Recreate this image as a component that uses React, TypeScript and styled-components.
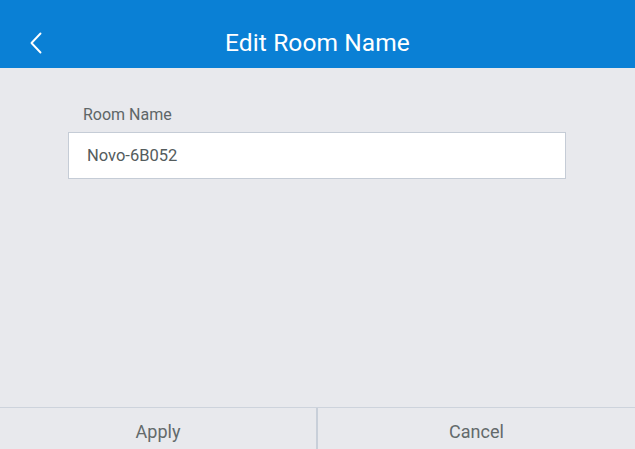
import React from 'react';
import styled, { createGlobalStyle } from 'styled-components';

const GlobalStyle = createGlobalStyle`
  html, body {
    margin: 0;
    padding: 0;
    background-color: #e8e9ed;
    font-family: Roboto, "Liberation Sans", sans-serif;
  }
`;

const Screen = styled.div`
  width: 635px;
  height: 449px;
  display: flex;
  flex-direction: column;
  background-color: #e8e9ed;
  overflow: hidden;
`;

const Header = styled.header`
  box-sizing: border-box;
  height: 68px;
  padding-top: 17px;
  flex-shrink: 0;
  display: grid;
  grid-template-columns: 68px 1fr 68px;
  align-items: center;
  background-color: #0a80d5;
  color: #ffffff;
`;

const BackButton = styled.button`
  height: 51px;
  padding: 0 0 0 29px;
  display: flex;
  align-items: center;
  background: none;
  border: none;
  color: #ffffff;
  cursor: pointer;
`;

const Title = styled.h1`
  margin: 0;
  text-align: center;
  font-size: 24.5px;
  font-weight: 400;
  letter-spacing: 0.1px;
`;

const Content = styled.main`
  flex: 1;
  padding: 0 69px 0 68px;
  display: flex;
  flex-direction: column;
`;

const Label = styled.label`
  margin: 38px 0 8px 15px;
  font-size: 16px;
  line-height: 18px;
  color: #5e6667;
`;

const NameInput = styled.input`
  box-sizing: border-box;
  width: 498px;
  height: 47px;
  padding: 0 18px;
  border: 1.5px solid #c5ccd6;
  background-color: #ffffff;
  font-family: Roboto, "Liberation Sans", sans-serif;
  font-size: 16.5px;
  color: #545c5d;
  outline: none;
`;

const Footer = styled.footer`
  height: 41px;
  flex-shrink: 0;
  display: grid;
  grid-template-columns: 316px 1fr;
  border-top: 1.5px solid #cdd3dc;
`;

const FooterButton = styled.button<{ $divider?: boolean }>`
  background: none;
  border: none;
  border-left: ${(p) => (p.$divider ? '2px solid #c8cfd9' : 'none')};
  font-family: Roboto, "Liberation Sans", sans-serif;
  font-size: 18px;
  color: #636a6b;
  padding: 5px 0 0;
  cursor: pointer;
`;

const App: React.FC = () => {
  return (
    <>
      <GlobalStyle />
      <Screen>
        <Header>
          <BackButton aria-label="Back">
            <svg width="14" height="22" viewBox="0 0 14 22" fill="none">
              <path d="M11.5 1.5 L2.5 11 L11.5 20.5" stroke="#ffffff" strokeWidth="1.9" strokeLinecap="round" strokeLinejoin="round" />
            </svg>
          </BackButton>
          <Title>Edit Room Name</Title>
          <span />
        </Header>
        <Content>
          <Label htmlFor="room-name">Room Name</Label>
          <NameInput id="room-name" defaultValue="Novo-6B052" />
        </Content>
        <Footer>
          <FooterButton>Apply</FooterButton>
          <FooterButton $divider>Cancel</FooterButton>
        </Footer>
      </Screen>
    </>
  );
};

export default App;
